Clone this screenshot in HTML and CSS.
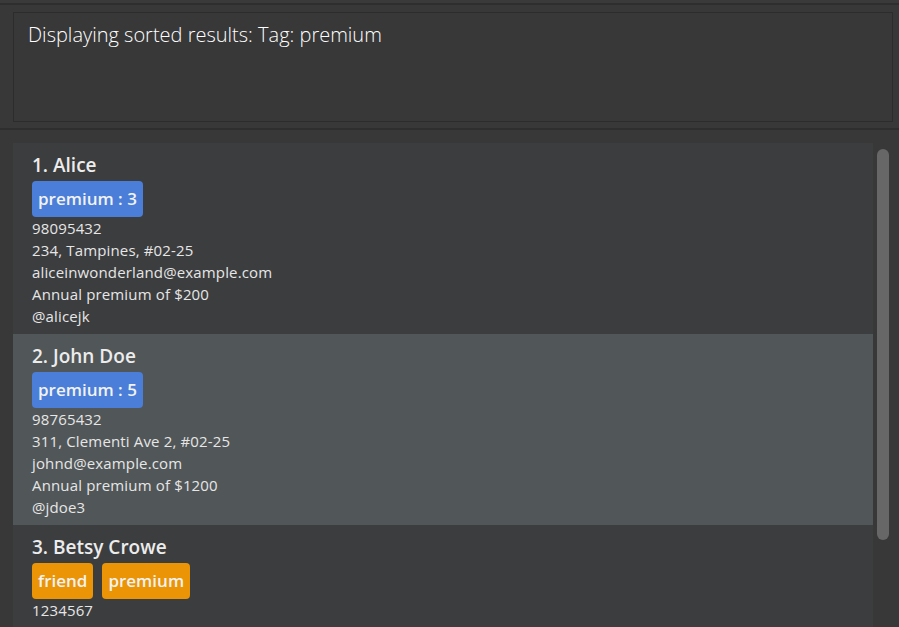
FILE: index.html
```html
<!DOCTYPE html>
<html>
<head>
<meta charset="utf-8">
<link rel="stylesheet" href="styles.css">
</head>
<body>
<div class="app">
  <div class="topline"></div>
  <div class="result-pane">
    <div class="result-box">Displaying sorted results: Tag: premium</div>
  </div>
  <div class="list-pane">
    <div class="list">
      <div class="card">
        <div class="name">1. Alice</div>
        <div class="tags"><span class="tag blue">premium : 3</span></div>
        <div class="line">98095432</div>
        <div class="line">234, Tampines, #02-25</div>
        <div class="line">aliceinwonderland@example.com</div>
        <div class="line">Annual premium of $200</div>
        <div class="line">@alicejk</div>
      </div>
      <div class="card selected">
        <div class="name">2. John Doe</div>
        <div class="tags"><span class="tag blue">premium : 5</span></div>
        <div class="line">98765432</div>
        <div class="line">311, Clementi Ave 2, #02-25</div>
        <div class="line">johnd@example.com</div>
        <div class="line">Annual premium of $1200</div>
        <div class="line">@jdoe3</div>
      </div>
      <div class="card">
        <div class="name">3. Betsy Crowe</div>
        <div class="tags"><span class="tag orange">friend</span><span class="tag orange">premium</span></div>
        <div class="line">1234567</div>
      </div>
    </div>
    <div class="scrolltrack"><div class="thumb"></div></div>
  </div>
</div>
</body>
</html>
```
FILE: styles.css
```css
html, body {
  margin: 0;
  padding: 0;
  background: #383838;
  height: 100%;
  overflow: hidden;
}
.app {
  width: 899px;
  height: 627px;
  display: flex;
  flex-direction: column;
  font-family: "Open Sans", "Noto Sans", sans-serif;
}
.topline {
  height: 3px;
  background: #3a3a3a;
  border-bottom: 2px solid #2e2e2e;
}
.result-pane {
  padding: 7px 6px 6px 13px;
  border-bottom: 2px solid #2e2e2e;
}
.result-box {
  border: 1px solid #2c2c2c;
  background: #383838;
  color: #ffffff;
  font-size: 20px;
  font-weight: 300;
  padding: 8px 14px;
  box-sizing: border-box;
  height: 110px;
}
.list-pane {
  flex: 1;
  display: flex;
  padding: 13px 0 0 13px;
  min-height: 0;
}
.list {
  width: 860px;
  background: #3c3d3f;
  overflow: hidden;
}
.card {
  height: 191px;
  box-sizing: border-box;
  padding: 10px 19px;
  color: #e8e8e8;
}
.card.selected {
  background: #515658;
}
.name {
  font-size: 19px;
  font-weight: 600;
  color: #ececec;
  line-height: 24px;
  margin-bottom: 4px;
}
.tags {
  display: flex;
  gap: 9px;
}
.tag {
  display: inline-block;
  height: 36px;
  line-height: 36px;
  padding: 0 6px;
  border-radius: 4px;
  color: #f2f2f2;
  font-size: 17px;
  font-weight: 600;
}
.tag.blue { background: #4a7ed8; }
.tag.orange { background: #eb9406; }
.line {
  font-size: 15px;
  letter-spacing: 0.15px;
  line-height: 22px;
  color: #e6e6e6;
}
.scrolltrack {
  flex: 1;
  position: relative;
}
.thumb {
  position: absolute;
  left: 4px;
  top: 6px;
  width: 12px;
  height: 391px;
  border-radius: 6px;
  background: #676767;
}
```
